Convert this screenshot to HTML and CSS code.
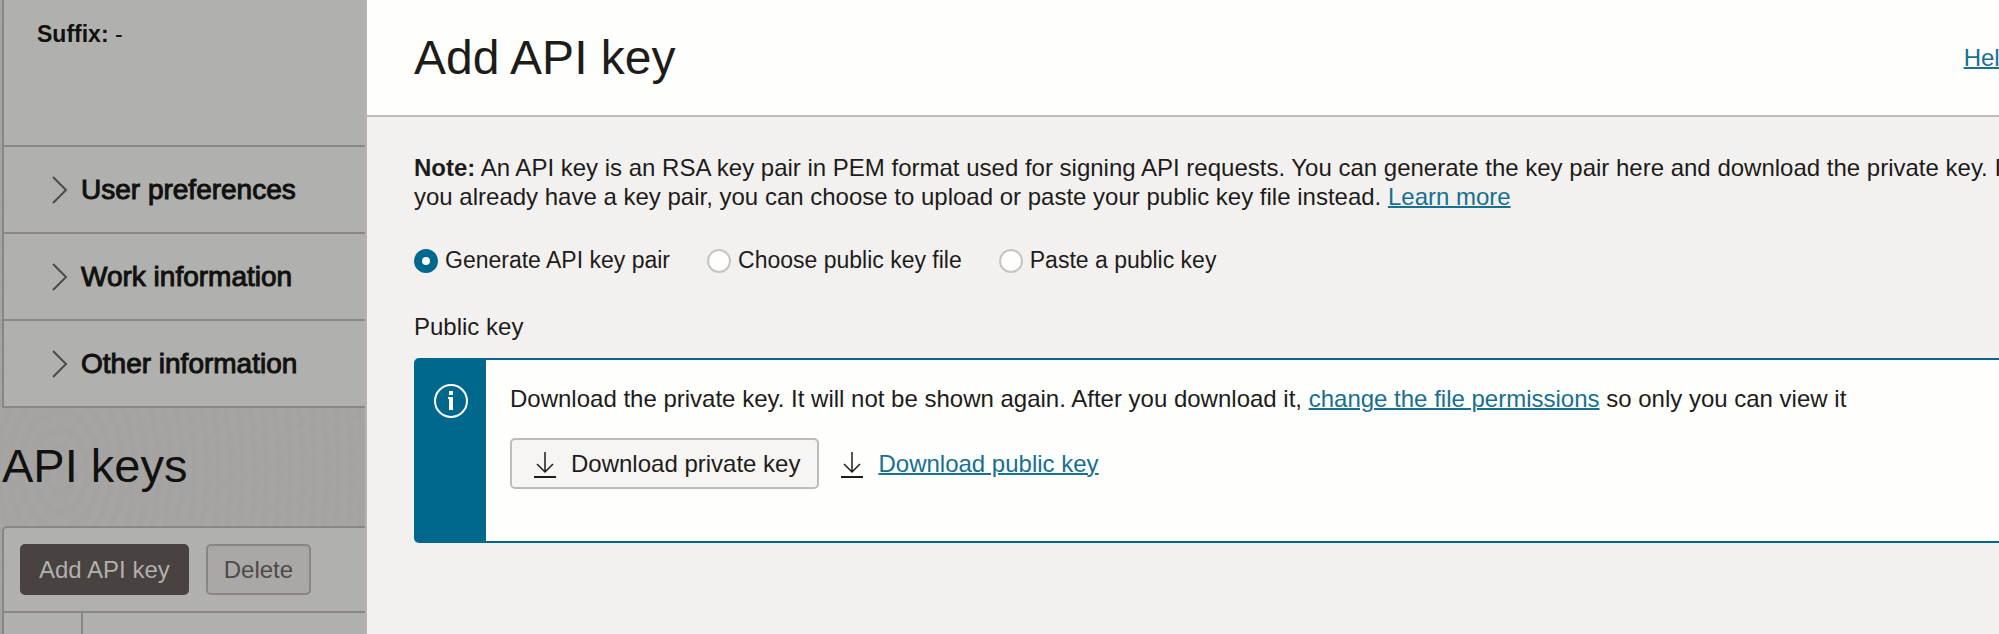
FILE: index.html
```html
<!DOCTYPE html>
<html lang="en">
<head>
<meta charset="utf-8">
<title>Add API key</title>
<link rel="stylesheet" href="styles.css">
</head>
<body>
<div class="layout">
  <div class="page">
    <section class="details">
      <p class="details-field"><strong>Suffix:</strong> -</p>
      <button class="details-row" type="button">
        <svg class="chevron" viewBox="0 0 16 28" aria-hidden="true"><path d="M1 1 14 14 1 27"/></svg>
        User preferences
      </button>
      <button class="details-row" type="button">
        <svg class="chevron" viewBox="0 0 16 28" aria-hidden="true"><path d="M1 1 14 14 1 27"/></svg>
        Work information
      </button>
      <button class="details-row" type="button">
        <svg class="chevron" viewBox="0 0 16 28" aria-hidden="true"><path d="M1 1 14 14 1 27"/></svg>
        Other information
      </button>
    </section>
    <h2 class="page-title">API keys</h2>
    <section class="keys">
      <div class="keys-toolbar">
        <button class="btn btn-dark" type="button">Add API key</button>
        <button class="btn btn-muted" type="button">Delete</button>
      </div>
      <table class="keys-table">
        <tr><td class="keys-check"></td><td></td></tr>
      </table>
    </section>
  </div>
  <main class="panel">
    <header class="panel-header">
      <h1 class="panel-title">Add API key</h1>
      <a class="link" href="#help">Help</a>
    </header>
    <div class="panel-body">
      <p class="note"><strong>Note:</strong> An API key is an RSA key pair in PEM format used for signing API requests. You can generate the key pair here and download the private key. If you already have a key pair, you can choose to upload or paste your public key file instead. <a class="link" href="#learn">Learn more</a></p>
      <div class="options">
        <label class="option"><input class="radio" type="radio" name="source" checked>Generate API key pair</label>
        <label class="option"><input class="radio" type="radio" name="source">Choose public key file</label>
        <label class="option"><input class="radio" type="radio" name="source">Paste a public key</label>
      </div>
      <p class="field-label">Public key</p>
      <div class="alert">
        <div class="alert-side">
          <svg class="info" viewBox="0 0 34 34" aria-hidden="true">
            <circle cx="17" cy="17" r="16"/>
            <path d="M15 7h4v4h-4zM14 13h5v13h-4V15h-1z"/>
          </svg>
        </div>
        <div class="alert-body">
          <p class="alert-text">Download the private key. It will not be shown again. After you download it, <a class="link" href="#permissions">change the file permissions</a> so only you can view it</p>
          <div class="downloads">
            <button class="btn btn-light" type="button">
              <svg class="download" viewBox="0 0 24 28" aria-hidden="true"><path class="arrow" d="M12 2v20M4 14l8 8 8-8"/><path d="M1 27h22"/></svg>
              Download private key
            </button>
            <div class="download-link">
              <svg class="download" viewBox="0 0 24 28" aria-hidden="true"><path class="arrow" d="M12 2v20M4 14l8 8 8-8"/><path d="M1 27h22"/></svg>
              <a class="link" href="#public">Download public key</a>
            </div>
          </div>
        </div>
      </div>
    </div>
  </main>
</div>
</body>
</html>
```
FILE: styles.css
```css
* { box-sizing: border-box; }

body {
  margin: 0;
  overflow: hidden;
  font: 24px/29px "Liberation Sans", Arial, sans-serif;
  color: #1d1c1a;
}

p, h1, h2 { margin: 0; }

button { font: inherit; color: inherit; }

.layout {
  display: grid;
  grid-template-columns: 367px 1fr;
  height: 100vh;
  overflow: hidden;
}

/* Dimmed page behind the panel */
.page {
  overflow: hidden;
  padding-left: 2px;
  border-right: 2px solid #b9b2ab;
  color: #11110f;
  background:
    repeating-radial-gradient(ellipse at 60px 470px, rgba(150, 148, 148, 0.12) 0 3px, transparent 7px 12px),
    repeating-radial-gradient(circle at 520px 700px, rgba(150, 148, 148, 0.08) 0 3px, transparent 7px 13px),
    #a6a5a3;
}

.details {
  border: 2px solid #8b8684;
  border-width: 0 0 2px 2px;
  background: #b0b0ae;
}

.details-field {
  padding: 20px 33px 96px;
  font-size: 23px;
}

.details-row {
  display: flex;
  align-items: center;
  gap: 13px;
  width: 100%;
  height: 87px;
  padding: 1px 0 0 48px;
  border: 0;
  border-top: 2px solid #8b8684;
  background: none;
  font-size: 28px;
  line-height: 32px;
  text-align: left;
  -webkit-text-stroke: 1px #11110f;
}

.chevron {
  width: 16px;
  height: 28px;
  fill: none;
  stroke: #4c4b4a;
  stroke-width: 2;
}

.page-title {
  padding: 29px 0 31px;
  font-size: 47px;
  font-weight: 400;
  line-height: 58px;
}

.keys {
  border: 2px solid #8b8684;
  border-right: 0;
  border-bottom: 0;
  border-top-left-radius: 5px;
  background: #b0b0ae;
}

.keys-toolbar {
  display: flex;
  gap: 17px;
  padding: 16px;
}

.keys-table {
  width: 100%;
  height: 40px;
  border-collapse: collapse;
  border-top: 2px solid #8b8684;
}

.keys-check {
  width: 78px;
  border-right: 2px solid #8b8684;
}

.btn {
  display: flex;
  align-items: center;
  height: 51px;
  padding: 0 17px;
  border: 2px solid;
  border-radius: 5px;
}

.btn-dark {
  border-color: #484240;
  background: #484240;
  color: #b0b0ae;
}

.btn-muted {
  padding: 0 16px;
  border-color: #8b8684;
  background: #a9a8a6;
  color: #504a48;
}

.btn-light {
  gap: 14px;
  padding-left: 21px;
  border-color: #c2bbb4;
  background: #f6f5f4;
}

/* Panel; its right edge runs past the window */
.panel {
  margin-right: -62px;
  background: #f3f1f0;
}

.panel-header {
  display: flex;
  align-items: center;
  justify-content: space-between;
  height: 117px;
  padding: 0 48px 0 47px;
  border-bottom: 2px solid #c1bbb5;
  background: #fefefd;
}

.panel-title {
  font-size: 48px;
  font-weight: 400;
  line-height: 56px;
}

.link {
  color: #17708f;
  text-decoration: underline;
  text-decoration-thickness: 2px;
}

.panel-body { padding: 36px 48px 48px 47px; }

.options {
  display: flex;
  gap: 37px;
  padding: 35px 0 37px;
  font-size: 23px;
}

.option {
  display: flex;
  align-items: center;
  gap: 7px;
}

.radio {
  appearance: none;
  width: 24px;
  height: 24px;
  margin: 0;
  border: 2px solid #c9c3bd;
  border-radius: 50%;
  background: #fefefd;
}

.radio:checked { border: 8px solid #00688c; }

.alert {
  display: flex;
  margin-top: 17px;
  border: 2px solid #00688c;
  border-radius: 5px;
  background: #fefefd;
}

.alert-side {
  width: 70px;
  padding: 24px 18px;
  background: #00688c;
}

.info {
  display: block;
  width: 34px;
  height: 34px;
  fill: #fff;
}

.info circle {
  fill: none;
  stroke: #fff;
  stroke-width: 2;
}

.alert-body { padding: 24px 24px 52px; }

.downloads {
  display: flex;
  align-items: center;
  gap: 21px;
  margin-top: 25px;
}

.download-link {
  display: flex;
  align-items: center;
  gap: 14px;
}

.download {
  width: 24px;
  height: 28px;
  fill: none;
  stroke: #1d1c1a;
  stroke-width: 2;
}

.arrow { stroke-width: 1.5; }
```
